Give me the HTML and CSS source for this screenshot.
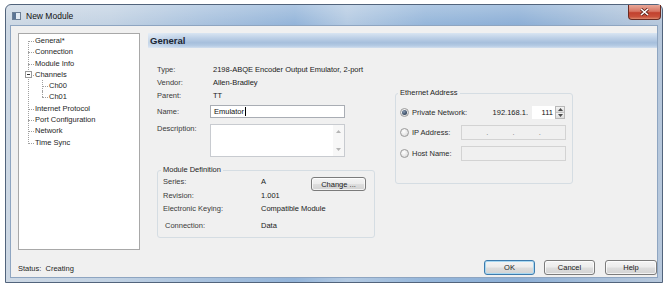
FILE: index.html
```html
<!DOCTYPE html>
<html lang="en">
<head>
    <meta charset="UTF-8">
    <title>New Module</title>
    <link rel="stylesheet" href="styles.css">
</head>
<body>
    <div class="window">
        <div class="titlebar">
            <svg class="app-icon" width="9" height="8" viewBox="0 0 9 8">
                <rect x="0.5" y="0.5" width="8" height="7" fill="#e4ebf3" stroke="#6c7f96"/>
                <rect x="1" y="1" width="3" height="6" fill="#5c7594"/>
            </svg>
            <span class="title">New Module</span>
            <button class="close-btn">
                <svg width="9" height="8" viewBox="0 0 9 8">
                    <path d="M1 1 L8 7 M8 1 L1 7" stroke="#5a2018" stroke-width="3"/>
                    <path d="M1 1 L8 7 M8 1 L1 7" stroke="#ffffff" stroke-width="1.6"/>
                </svg>
            </button>
        </div>

        <div class="client">
            <div class="main">
                <div class="tree">
                    <div class="tree-list">
                        <div class="node root first">General*</div>
                        <div class="node root">Connection</div>
                        <div class="node root">Module Info</div>
                        <div class="node root"><span class="expander"></span>Channels</div>
                        <div class="node child">Ch00</div>
                        <div class="node child last">Ch01</div>
                        <div class="node root">Internet Protocol</div>
                        <div class="node root">Port Configuration</div>
                        <div class="node root">Network</div>
                        <div class="node root last">Time Sync</div>
                    </div>
                </div>

                <div class="panel">
                    <div class="panel-header">General</div>
                    <div class="panel-body">
                        <div class="col-left">
                            <div class="info-grid">
                                <span class="label">Type:</span>
                                <span class="value">2198-ABQE Encoder Output Emulator, 2-port</span>
                                <span class="label">Vendor:</span>
                                <span class="value">Allen-Bradley</span>
                                <span class="label">Parent:</span>
                                <span class="value">TT</span>
                                <span class="label row-name">Name:</span>
                                <div class="text-box row-name">Emulator<span class="caret"></span></div>
                                <span class="label row-desc">Description:</span>
                                <div class="text-area row-desc">
                                    <div class="scroll">
                                        <svg width="5" height="3" viewBox="0 0 5 3"><path d="M0 3 L2.5 0 L5 3 Z" fill="#b5b5b5"/></svg>
                                        <svg width="5" height="3" viewBox="0 0 5 3"><path d="M0 0 L2.5 3 L5 0 Z" fill="#b5b5b5"/></svg>
                                    </div>
                                </div>
                            </div>

                            <fieldset class="group module-def">
                                <legend>Module Definition</legend>
                                <div class="def-grid">
                                    <span class="label">Series:</span>
                                    <span class="value">A</span>
                                    <button class="btn change-btn">Change ...</button>
                                    <span class="label">Revision:</span>
                                    <span class="value">1.001</span>
                                    <span class="label">Electronic Keying:</span>
                                    <span class="value wide">Compatible Module</span>
                                    <span class="label indent">Connection:</span>
                                    <span class="value wide">Data</span>
                                </div>
                            </fieldset>
                        </div>

                        <fieldset class="group ethernet">
                            <legend>Ethernet Address</legend>
                            <div class="eth-row first">
                                <span class="radio checked"></span>
                                <span class="radio-label">Private Network:</span>
                                <span class="ip-prefix">192.168.1.</span>
                                <div class="spin-box">
                                    <span class="spin-value">111</span>
                                    <div class="spin-buttons">
                                        <span class="spin-up"><svg width="5" height="3" viewBox="0 0 5 3"><path d="M0 3 L2.5 0 L5 3 Z" fill="#4a4a4a"/></svg></span>
                                        <span class="spin-down"><svg width="5" height="3" viewBox="0 0 5 3"><path d="M0 0 L2.5 3 L5 0 Z" fill="#4a4a4a"/></svg></span>
                                    </div>
                                </div>
                            </div>
                            <div class="eth-row">
                                <span class="radio"></span>
                                <span class="radio-label">IP Address:</span>
                                <div class="disabled-box ip-box"><span>.</span><span>.</span><span>.</span></div>
                            </div>
                            <div class="eth-row">
                                <span class="radio"></span>
                                <span class="radio-label">Host Name:</span>
                                <div class="disabled-box"></div>
                            </div>
                        </fieldset>
                    </div>
                </div>
            </div>

            <div class="footer">
                <span class="status">Status:&nbsp; Creating</span>
                <div class="buttons">
                    <button class="btn dialog-btn default">OK</button>
                    <button class="btn dialog-btn">Cancel</button>
                    <button class="btn dialog-btn help">Help</button>
                </div>
            </div>
        </div>
    </div>
</body>
</html>
```

FILE: styles.css
```css
* {
    margin: 0;
    padding: 0;
    box-sizing: border-box;
}

body {
    font-family: "Liberation Sans", Arial, sans-serif;
    font-size: 7.5px;
    color: #2a2a2a;
    background: #ffffff;
}

/* window frame */

.window {
    width: 658px;
    height: 279px;
    margin: 4px 0 0 5px;
    border: 1px solid #52647c;
    border-radius: 6px 6px 0 0;
    padding: 0 4px 4px;
    display: flex;
    flex-direction: column;
    background:
        linear-gradient(180deg, rgba(255, 255, 255, 0.25) 0, rgba(255, 255, 255, 0) 20px),
        linear-gradient(90deg, #cdd8e4 0%, #c2d2e3 16%, #a9c2de 30%, #93b4d9 44%, #b4cae2 52%, #95b6da 64%, #8cafd6 78%, #a9c0da 92%, #b7c8dc 100%);
}

.titlebar {
    height: 20px;
    display: flex;
    align-items: center;
}

.app-icon {
    margin-left: 2px;
    margin-top: 1px;
}

.title {
    margin-left: 5px;
    margin-top: 1px;
    font-size: 8.5px;
    color: #111;
}

.close-btn {
    align-self: flex-start;
    margin-left: auto;
    margin-right: -3px;
    width: 33px;
    height: 15px;
    border: 1px solid #6a2b22;
    border-top: none;
    border-radius: 0 0 4px 4px;
    background: linear-gradient(180deg, #e9a898 0%, #d77563 45%, #c2412e 55%, #c9523c 85%, #e08c70 100%);
    display: flex;
    align-items: center;
    justify-content: center;
}

.client {
    flex: 1;
    background: #f0f0f0;
    border: 1px solid #8ea5c1;
    padding: 7px 0 2px 7px;
    display: flex;
    flex-direction: column;
}

.main {
    height: 217px;
    display: flex;
    gap: 8px;
}

/* navigation tree */

.tree {
    width: 122px;
    background: #ffffff;
    border: 1px solid #a8a8a8;
    padding-top: 1px;
}

.tree-list {
    position: relative;
}

.tree-list::before {
    content: "";
    position: absolute;
    left: 9px;
    top: 6px;
    bottom: 6px;
    border-left: 1px dotted #a0a0a0;
}

.node {
    position: relative;
    height: 11.3px;
    line-height: 11.3px;
    padding-left: 16px;
    color: #1e1e1e;
    white-space: nowrap;
}

.node::before {
    content: "";
    position: absolute;
    left: 9px;
    top: 6px;
    width: 6px;
    border-top: 1px dotted #a0a0a0;
}

.node.child {
    padding-left: 30px;
}

.node.child::before {
    left: 23px;
}

.node.child::after {
    content: "";
    position: absolute;
    left: 23px;
    top: 0;
    height: 100%;
    border-left: 1px dotted #a0a0a0;
}

.node.child.last::after {
    height: 6px;
}

.expander {
    position: absolute;
    left: 6px;
    top: 2px;
    width: 7px;
    height: 7px;
    border: 1px solid #9a9a9a;
    background: #ffffff;
    z-index: 1;
}

.expander::after {
    content: "";
    position: absolute;
    left: 1px;
    top: 2px;
    width: 3px;
    border-top: 1px solid #333;
}

/* general panel */

.panel {
    flex: 1;
    display: flex;
    flex-direction: column;
}

.panel-header {
    height: 15px;
    line-height: 15px;
    padding-left: 2px;
    font-size: 9.5px;
    font-weight: bold;
    color: #1b2633;
    background:
        linear-gradient(90deg, rgba(255, 255, 255, 0.35) 0, rgba(255, 255, 255, 0) 30px),
        linear-gradient(180deg, #d9e5f2 0%, #bccfe6 35%, #a6bfdc 65%, #b5cbe4 85%, #d2dfee 100%);
}

.panel-body {
    display: flex;
    padding-left: 9px;
}

.col-left {
    width: 218px;
}

.label {
    color: #3a3a3a;
}

.value {
    color: #1a1a1a;
}

.info-grid {
    margin-top: 15px;
    display: grid;
    grid-template-columns: 53px 135px;
    align-items: center;
}

.info-grid .label,
.info-grid .value {
    line-height: 13px;
}

.info-grid .value {
    padding-left: 3px;
    white-space: nowrap;
}

.info-grid .row-name {
    margin-top: 3px;
}

.text-box {
    height: 13px;
    background: #ffffff;
    border: 1px solid #a9adb4;
    padding-left: 3px;
    color: #111;
    display: flex;
    align-items: center;
}

.caret {
    width: 1px;
    height: 9px;
    background: #000;
    margin-left: 1px;
}

.info-grid .row-desc {
    margin-top: 6px;
    align-self: start;
}

.info-grid .label.row-desc {
    margin-top: 4px;
}

.text-area {
    height: 33px;
    background: #ffffff;
    border: 1px solid #c8cbd0;
    display: flex;
    justify-content: flex-end;
}

.scroll {
    width: 11px;
    background: #f7f7f7;
    display: flex;
    flex-direction: column;
    align-items: center;
    justify-content: space-between;
    padding: 5px 0 5px;
}

/* group boxes */

.group {
    border: 1px solid #d5dde3;
    border-radius: 3px;
    min-width: 0;
}

.group legend {
    line-height: 10px;
    padding: 0 2px;
    margin-left: -2px;
    color: #1e1e1e;
}

.module-def {
    margin-top: 8px;
    padding: 0 8px 0 5px;
}

.def-grid {
    display: grid;
    grid-template-columns: 98px 50px 55px;
    grid-template-rows: 13px 15px 10px 24px;
    align-items: center;
}

.def-grid .wide {
    grid-column: span 2;
}

.def-grid .indent {
    padding-left: 2px;
}

.change-btn {
    grid-column: 3;
    grid-row: 1 / 3;
    align-self: start;
    margin-top: 2px;
    height: 14px;
}

.btn {
    font-family: "Liberation Sans", Arial, sans-serif;
    font-size: 7.5px;
    color: #1a1a1a;
    border: 1px solid #7b7b7b;
    border-radius: 3px;
    background: linear-gradient(180deg, #f4f4f4 0%, #ececec 48%, #dedede 52%, #d2d2d2 100%);
    box-shadow: inset 0 0 0 1px rgba(255, 255, 255, 0.7);
}

.ethernet {
    margin-left: 20px;
    margin-top: 40px;
    width: 178px;
    height: 96px;
    padding: 0 7px 0 4px;
}

.eth-row {
    display: flex;
    align-items: center;
    height: 15px;
    margin-top: 6px;
}

.eth-row.first {
    height: 14px;
    margin-top: 7px;
}

.radio {
    width: 9px;
    height: 9px;
    border: 1px solid #9a9a9a;
    border-radius: 50%;
    background: radial-gradient(circle at 40% 35%, #ffffff 0%, #eaeaea 50%, #cfcfcf 100%);
    display: flex;
    align-items: center;
    justify-content: center;
}

.radio.checked::after {
    content: "";
    width: 5px;
    height: 5px;
    border-radius: 50%;
    background: radial-gradient(circle at 40% 35%, #8a9cb3 0%, #3c4f68 60%, #24354b 100%);
}

.radio-label {
    margin-left: 3px;
    color: #2a2a2a;
}

.ip-prefix {
    margin-left: auto;
    margin-right: 4px;
    color: #1a1a1a;
    word-spacing: 1px;
}

.spin-box {
    display: flex;
    height: 13px;
}

.spin-value {
    width: 23px;
    background: #ffffff;
    text-align: right;
    padding-right: 2px;
    line-height: 13px;
    color: #111;
}

.spin-buttons {
    width: 10px;
    display: flex;
    flex-direction: column;
    border: 1px solid #b8b8b8;
}

.spin-buttons span {
    flex: 1;
    display: flex;
    align-items: center;
    justify-content: center;
    background: linear-gradient(180deg, #f3f3f3, #dcdcdc);
}

.spin-up {
    border-bottom: 1px solid #c4c4c4;
}

.disabled-box {
    margin-left: auto;
    margin-right: -1px;
    width: 105px;
    height: 15px;
    border: 1px solid #d3d3d3;
    background: #f0f0f0;
}

.ip-box {
    display: flex;
    justify-content: space-evenly;
    align-items: center;
    color: #7a7a7a;
    line-height: 8px;
}

/* footer */

.footer {
    margin-top: 10px;
    height: 15px;
    display: flex;
    align-items: center;
}

.status {
    color: #1e1e1e;
    padding-top: 1px;
}

.buttons {
    margin-left: auto;
    display: flex;
    gap: 9px;
}

.dialog-btn {
    width: 51px;
    height: 15px;
}

.dialog-btn.help {
    margin-left: 1px;
    width: 52px;
}

.dialog-btn.default {
    border-color: #3d7bad;
    box-shadow: inset 0 0 0 1px #a8d8f2;
}
```
